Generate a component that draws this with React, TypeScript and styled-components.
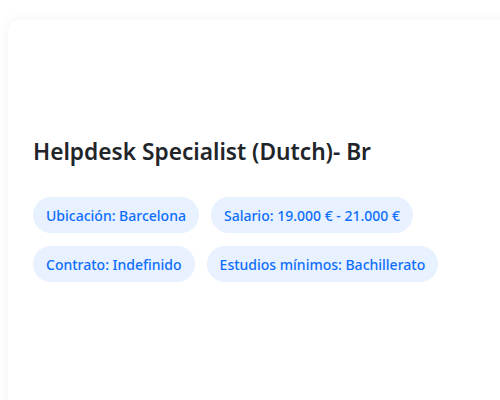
import React from "react";
import styled, { createGlobalStyle } from "styled-components";

const tags = [
  "Ubicación: Barcelona",
  "Salario: 19.000 € - 21.000 €",
  "Contrato: Indefinido",
  "Estudios mínimos: Bachillerato",
];

export default function App() {
  return (
    <>
      <GlobalStyle />
      <S.Page>
        <S.Card>
          <S.Header />
          <S.Title>Helpdesk Specialist (Dutch)- Br</S.Title>
          <S.Tags>
            {tags.map((tag) => (
              <S.Tag key={tag}>{tag}</S.Tag>
            ))}
          </S.Tags>
        </S.Card>
      </S.Page>
    </>
  );
}

const GlobalStyle = createGlobalStyle`
  html, body {
    margin: 0;
    background: #ffffff;
    overflow: hidden;
  }
  body {
    font-family: "Noto Sans", "Open Sans", sans-serif;
  }
`;

const S = {
  Page: styled.div`
    width: 500px;
    height: 400px;
    padding: 20px 0 0 8px;
    box-sizing: border-box;
    overflow: hidden;
  `,
  Card: styled.div`
    width: 520px;
    min-height: 420px;
    background: #ffffff;
    border-radius: 12px;
    box-shadow: 0 0 14px rgba(0, 0, 0, 0.05);
    padding: 0 25px;
    box-sizing: border-box;
  `,
  Header: styled.div`
    height: 116px;
  `,
  Title: styled.h2`
    margin: 0 0 29px;
    font-size: 22.7px;
    font-weight: 600;
    line-height: 32px;
    color: #212529;
  `,
  Tags: styled.div`
    display: flex;
    flex-wrap: wrap;
    gap: 13px 12px;
    width: 420px;
  `,
  Tag: styled.span`
    display: inline-flex;
    align-items: center;
    height: 36px;
    padding: 0 13px;
    border-radius: 18px;
    background: #e7f1ff;
    color: #0d6efd;
    font-size: 14px;
    font-weight: 500;
  `,
};
